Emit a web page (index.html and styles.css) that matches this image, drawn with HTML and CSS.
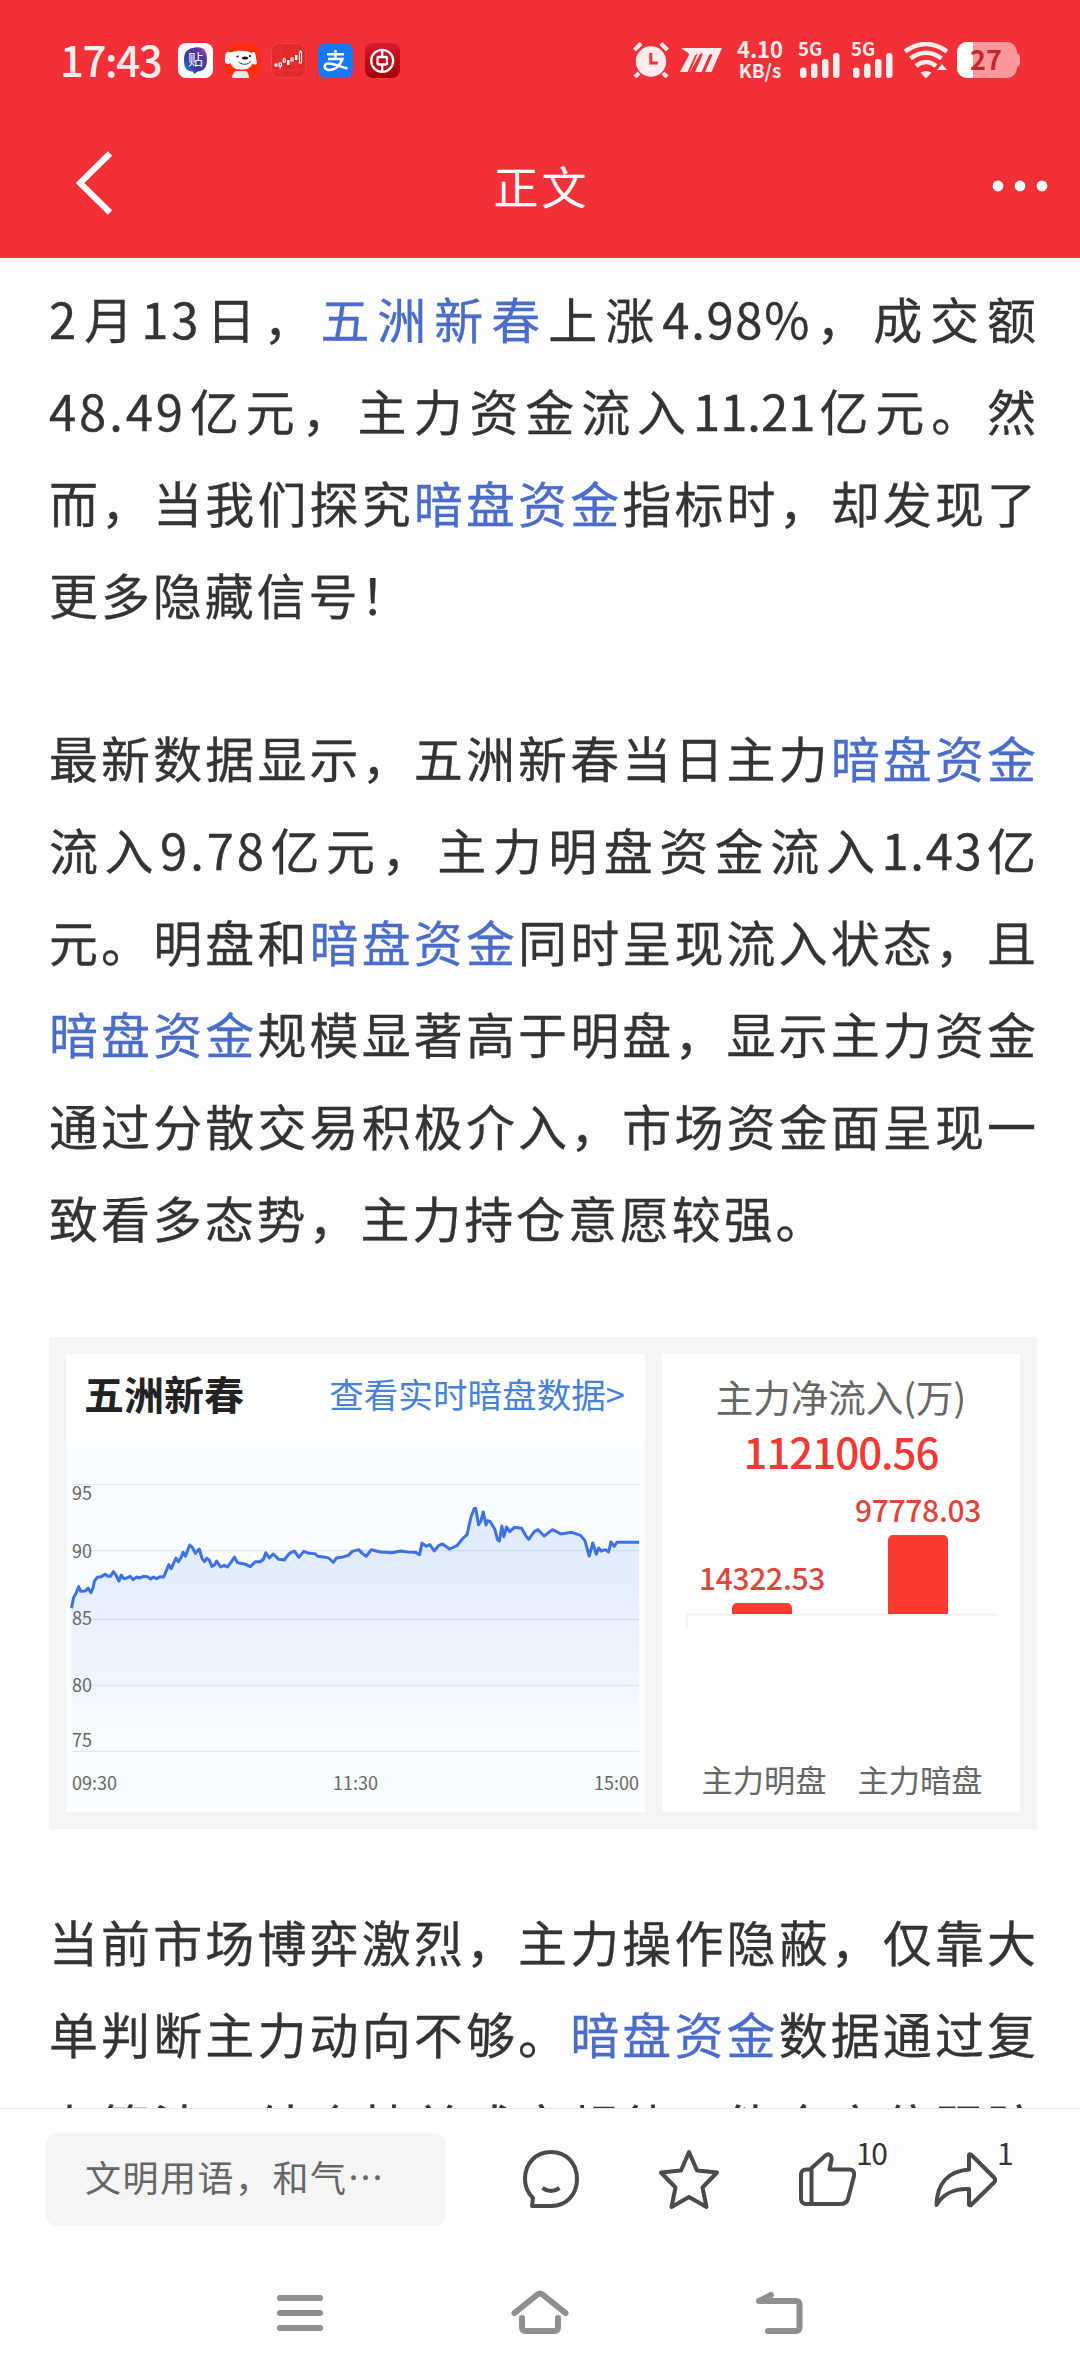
FILE: index.html
```html
<!DOCTYPE html>
<html lang="zh-CN">
<head>
<meta charset="utf-8">
<title>正文</title>
<link rel="stylesheet" href="styles.css">
</head>
<body>
<div class="screen">
  <header class="top">
    <div class="status">
      <span class="time">17:43</span>
      <div class="apps">
        <svg class="app" viewBox="0 0 35 35"><defs><linearGradient id="tb" x1="0" y1="1" x2="1" y2="0"><stop offset="0" stop-color="#1598f0"/><stop offset=".35" stop-color="#3a37a8"/><stop offset=".75" stop-color="#5038a4"/><stop offset="1" stop-color="#f0508c"/></linearGradient></defs><rect width="35" height="35" rx="8" fill="#fff"/><path d="M17 4.500C25 3.500 29 7 29 16s-3 12-9.500 12.500L16.500 31l-2-2.500C8 28 6 24.500 6 17S9 5.500 17 4.500z" fill="url(#tb)"/><text x="17.500" y="22" class="glyph tie">贴</text></svg>
        <svg class="app" viewBox="0 0 35 35"><rect width="35" height="35" rx="8" fill="#ff2d12"/><path d="M1 10c2-2 4-1 5-.500 5-2.500 16-2.500 20.500.500 2-2 4-1 4 2l1.500 8c-1 2-3 2-4.500.500-2 5-6 6-11 6s-9-1-11-6.500C3.500 22 .5 21 0 19c0-3 0-7 1-9z" fill="#fff"/><path d="M11 28h10c2 1.500 3 4 3 7H7c0-3 1.500-5.500 4-7z" fill="#f4e8e8"/><ellipse cx="20" cy="15" rx="3" ry="1.500" fill="#111"/><circle cx="12.500" cy="13.500" r="1.100" fill="#111"/><circle cx="25" cy="13" r="1.100" fill="#111"/><path d="M13.500 18.500c2 3.500 10.500 4 12-.500" fill="none" stroke="#333"/></svg>
        <svg class="app" viewBox="0 0 35 35"><rect x=".5" y=".5" width="34" height="34" rx="8" fill="#e32a2b" stroke="#ef4544"/><path d="M10 0v35M25 0v35M0 27h35" stroke="#ed3334"/><path d="M3.500 20.500h3v3h-3zM16 17h2.500v5H16zM24 12h2.500v5H24z" fill="#fff"/><path d="M8 20h2.500v3H8zM9.200 23v2.500M12.200 16h2v3h-2zM13 14.500V16M20 15h2v3h-2zM28.500 9h2v11h-2zM29.500 7v2" fill="none" stroke="#fff" stroke-width="1.100"/></svg>
        <svg class="app" viewBox="0 0 35 35"><rect width="35" height="35" rx="8" fill="#1677ff"/><path d="M9 11.200h17M17.500 7v8M10 16h14.500c-2 5.500-7 11-13 11-5.500 0-6.500-5.500-2-6.500 5-1 11 3 20 5" fill="none" stroke="#fff" stroke-width="2.500"/></svg>
        <svg class="app" viewBox="0 0 35 35"><defs><linearGradient id="bc" x2="0" y2="1"><stop stop-color="#d71d2c"/><stop offset="1" stop-color="#a4000b"/></linearGradient></defs><rect width="35" height="35" rx="8" fill="url(#bc)"/><g fill="none" stroke="#fff" stroke-width="2.300"><circle cx="17.200" cy="17.800" r="11"/><rect x="12.500" y="14" width="9.500" height="7.500" rx="1"/><path d="M17.200 7v7M17.200 21.500V29"/></g></svg>
      </div>
      <div class="signals">
        <svg class="alarm" viewBox="0 0 36 36"><circle cx="18" cy="19.500" r="15.200"/><path d="M6 31l-4 4M30 31l4 4M1.500 8L8 1.500M34.500 8L28 1.500" class="legs"/><path d="M17.800 11v10h7" class="hands"/></svg>
        <svg class="ride" viewBox="0 0 42 24"><path d="M1 0h41L31.500 24H25l7-16c1-2-1.800-3-2.800-1L21.500 24H15l7.500-17c.8-2-1.800-2.600-2.800-.6L10 24H0L9 7C9.500 4 4 3 1 0z"/><path d="M7.500 24L15 7.500l3-2.500-8.200 19z" fill="#f23038"/></svg>
        <div class="speed"><span>4.10</span><span>KB/s</span></div>
        <div class="cell"><span>5G</span><svg viewBox="0 0 40 25"><rect y="14.500" width="6.500" height="10.500" rx="3"/><rect x="11" y="10.500" width="6.500" height="14.500" rx="3"/><rect x="22" y="6" width="6.500" height="19" rx="3"/><rect x="33" width="6.500" height="25" rx="3"/></svg></div>
        <div class="cell second"><span>5G</span><svg viewBox="0 0 40 25"><rect y="14.500" width="6.500" height="10.500" rx="3"/><rect x="11" y="10.500" width="6.500" height="14.500" rx="3"/><rect x="22" y="6" width="6.500" height="19" rx="3"/><rect x="33" width="6.500" height="25" rx="3"/></svg></div>
        <svg class="wifi" viewBox="0 0 44 36"><path d="M1 9.500Q22-5.500 43 9.500M6.500 16.500Q22 5 37.500 16.500M12 24Q22 16 32 24" class="waves"/><path d="M16.500 30.500q5.500-3 11 0L22 36.500zM38 22l5 6H33z"/></svg>
        <svg class="battery" viewBox="0 0 63 36"><defs><clipPath id="bat"><rect width="60" height="36" rx="10"/></clipPath></defs><rect width="60" height="36" rx="10" fill="#fb989b"/><path d="M60 11c2 1 3 2 3 4v6c0 2-1 3-3 4z" fill="#fb989b"/><rect width="16" height="36" fill="#fff" clip-path="url(#bat)"/><text x="29" y="28" class="level">27</text></svg>
      </div>
    </div>
    <nav class="title-bar">
      <svg class="back" viewBox="0 0 37 64"><path d="M34 2.500L4 32l30 29.500"/></svg>
      <h1>正文</h1>
      <svg class="more" viewBox="0 0 56 12"><circle cx="6" cy="6" r="5.400"/><circle cx="28" cy="6" r="5.400"/><circle cx="50" cy="6" r="5.400"/></svg>
    </nav>
  </header>

  <main class="article">
    <p>
      <span class="line">2月13日，<a>五洲新春</a>上涨<span class="tight">4.98%</span>，成交额</span>
      <span class="line">48.49亿元，主力资金流入<span class="ones">11.21</span>亿元。然</span>
      <span class="line">而，当我们探究<a>暗盘资金</a>指标时，却发现了</span>
      <span class="line last">更多隐藏信号！</span>
    </p>
    <p>
      <span class="line">最新数据显示，五洲新春当日主力<a>暗盘资金</a></span>
      <span class="line">流入9.78亿元，主力明盘资金流入<span class="tight">1.43</span>亿</span>
      <span class="line">元。明盘和<a>暗盘资金</a>同时呈现流入状态，且</span>
      <span class="line"><a>暗盘资金</a>规模显著高于明盘，显示主力资金</span>
      <span class="line">通过分散交易积极介入，市场资金面呈现一</span>
      <span class="line last">致看多态势，主力持仓意愿较强。</span>
    </p>

    <section class="stock">
      <div class="card trend">
        <div class="trend-head"><b>五洲新春</b><a>查看实时暗盘数据&gt;</a></div>
        <div class="plot">
          <svg viewBox="66 360 1464 1104" preserveAspectRatio="none">
            <defs><linearGradient id="area" gradientUnits="userSpaceOnUse" x1="0" y1="560" x2="0" y2="1291"><stop stop-color="#3b6ff0" stop-opacity=".13"/><stop offset=".35" stop-color="#3b6ff0" stop-opacity=".1"/><stop offset="1" stop-color="#3b6ff0" stop-opacity="0"/></linearGradient></defs>
            <path class="grid" d="M80 490H1515M80 689H1515M80 895H1515M80 1093H1515M80 1291H1515"/>
            <path fill="url(#area)" d="M80 1291V862L98 797 129 815 145 769 186 752 206 768 313 768 344 711 379 672 403 684 422 712 457 738 492 708 532 737 571 695 604 715 643 690 742 724 806 686 838 686 912 690 960 701 966 667 997 690 1018 669 1036 684 1080 641 1100 562 1109 611 1121 573 1138 601 1162 660 1168 615 1218 622 1236 655 1259 626 1275 645 1296 626 1367 643 1389 705 1398 666 1419 690 1438 693 1444 663 1515 664V1291z"/>
            <polyline class="price" points="80,862 85,830 92,815 98,797 103,811 115,810 122,801 129,815 134,802 138,780 145,769 155,767 165,760 172,766 178,766 186,752 192,762 200,780 206,762 212,773 220,771 228,766 236,776 245,768 252,771 262,766 272,767 280,774 287,768 295,773 303,767 313,768 320,748 326,731 332,743 338,727 344,711 350,722 356,712 362,694 368,706 374,687 379,672 386,680 393,697 403,684 410,712 416,722 422,712 428,717 435,736 442,731 447,720 457,738 466,733 474,738 483,725 492,708 499,724 506,727 520,730 532,737 545,722 558,722 566,714 571,695 580,711 590,699 604,715 618,717 630,698 643,690 655,709 667,691 680,697 695,698 703,706 720,709 730,711 742,724 750,711 765,708 780,703 790,691 806,686 815,697 825,706 838,686 850,690 862,693 890,695 912,690 930,693 950,694 960,701 966,667 977,676 986,671 997,690 1008,674 1018,669 1036,684 1055,674 1068,654 1080,641 1090,588 1098,563 1102,562 1109,611 1115,600 1121,573 1128,612 1132,599 1138,601 1150,624 1157,656 1162,660 1168,615 1173,647 1180,618 1188,632 1200,619 1218,622 1228,643 1236,655 1250,632 1259,626 1275,645 1296,626 1318,639 1345,634 1367,643 1378,659 1389,705 1398,666 1407,700 1413,681 1419,690 1430,686 1438,693 1444,663 1452,676 1459,664 1515,664"/>
          </svg>
          <span class="tick y95">95</span><span class="tick y90">90</span><span class="tick y85">85</span><span class="tick y80">80</span><span class="tick y75">75</span>
          <div class="hours"><span>09:30</span><span>11:30</span><span>15:00</span></div>
        </div>
      </div>
      <div class="card flow">
        <div class="flow-title">主力净流入(万)</div>
        <div class="flow-total">112100.56</div>
        <div class="bars">
          <div class="col"><span>14322.53</span><i style="height:11px"></i></div>
          <div class="col"><span>97778.03</span><i style="height:79px"></i></div>
        </div>
        <div class="axis"></div>
        <div class="names"><span>主力明盘</span><span>主力暗盘</span></div>
      </div>
    </section>

    <p>
      <span class="line">当前市场博弈激烈，主力操作隐蔽，仅靠大</span>
      <span class="line">单判断主力动向不够。<a>暗盘资金</a>数据通过复</span>
      <span class="line">杂算法，结合挂单成交规律，能全方位跟踪</span>
    </p>
  </main>

  <footer class="actions">
    <div class="comment">文明用语，和气…</div>
    <div class="buttons">
      <svg viewBox="0 0 64 64"><path d="M13 59h19c16 0 26-12 26-27C58 16 47 5 32 5S6 16 6 32c0 8 3 14 8 19z"/><path d="M23.500 41q8.500 6 17 0"/></svg>
      <svg viewBox="0 0 64 64"><path d="M32 5l8 18.500 20 2-14.500 15L49.500 60 32 50 14.500 60l4-19.500L4 25.500l20-2z"/></svg>
      <div class="counted"><svg viewBox="0 0 64 64"><path d="M15 22.500h-4a5 5 0 0 0-5 5V52a5 5 0 0 0 5 5h34c5 0 7-2 8-5l6-23c.8-4-1-6.500-4-6.500H34.500l2-10c.6-4.500-3-6.500-6-4zM16.500 22.500V57"/></svg><span>10</span></div>
      <div class="counted"><svg viewBox="0 0 64 64"><path d="M36 8v14.500C15 24 4 37 3.500 58 11 46 21 41.500 36 42v15.500c.5 1 1.500 1 2 .5l23-22.500q2.500-2.500 0-5L38 7.500c-1-.5-1.500-.5-2 .5z"/></svg><span class="shares">1</span></div>
    </div>
  </footer>
  <div class="system">
    <svg viewBox="0 0 60 48"><path d="M10 9h40M10 24h40M10 39h40"/></svg>
    <svg viewBox="0 0 60 48"><path d="M4.500 24L27.500 5.500q2.500-2 5 0L55.500 24M12 29v9q0 4 4 4h28q4 0 4-4v-9"/></svg>
    <svg viewBox="0 0 60 48"><path d="M21 6L9 12M9 12h36.500q4 0 4 4v22q0 4-4 4H18"/></svg>
  </div>
</div>
</body>
</html>
```
FILE: styles.css
```css
* { box-sizing: border-box; }
body {
  margin: 0;
  font-family: "Noto Sans CJK SC", sans-serif;
  background: #fefefe;
  color: #333;
}
svg { display: block; flex: none; }
.screen { width: 1080px; height: 2376px; display: flex; flex-direction: column; overflow: hidden; }

.top { height: 258px; flex: none; background: #f23038; }
.status { height: 120px; padding: 0 60px 0 60px; display: flex; align-items: center; }
.time { width: 118px; padding-bottom: 3px; font-size: 42px; line-height: 42px; font-weight: 500; letter-spacing: -1.400px; color: #ffecec; }
.apps { display: flex; gap: 11.700px; }
.app { width: 35px; height: 35px; }
.glyph { text-anchor: middle; fill: #fff; }
.tie { font-size: 15px; }
.signals { margin-left: auto; display: flex; align-items: center; fill: #ffecec; color: #ffecec; }
.alarm { width: 36px; height: 36px; margin-right: 11px; }
.legs { stroke: #ffecec; stroke-width: 4; }
.hands { fill: none; stroke: #f23038; stroke-width: 3; }
.ride { width: 42px; height: 24px; margin-right: 16px; }
.speed { width: 44px; margin-right: 18px; padding-bottom: 2px; display: flex; flex-direction: column; align-items: center; font-size: 22px; line-height: 21px; font-weight: 700; }
.speed span + span { font-size: 19px; }
.cell { width: 40px; height: 36px; margin-right: 13px; display: flex; flex-direction: column; justify-content: flex-end; position: relative; }
.second { margin-right: 11px; }
.cell span { position: absolute; left: -2px; top: -3px; font-size: 18.500px; line-height: 18px; font-weight: 700; }
.cell svg { width: 40px; height: 25px; }
.wifi { width: 44px; height: 36px; margin-right: 9px; }
.waves { fill: none; stroke: #ffecec; stroke-width: 4.500; }
.battery { width: 63px; height: 36px; }
.level { font-size: 27px; font-weight: 700; text-anchor: middle; fill: #c1272d; }

.title-bar { height: 138px; padding: 0 32px 0 76px; display: grid; grid-template-columns: 1fr auto 1fr; align-items: center; }
.back { width: 37px; height: 64px; margin-bottom: 12px; fill: none; stroke: #fff; stroke-width: 6; }
.title-bar h1 { margin: 0 41px 7px 0; font-size: 45px; line-height: 60px; font-weight: 400; letter-spacing: 3px; color: #fff; }
.more { width: 56px; height: 12px; margin-bottom: 6px; justify-self: end; fill: #fff; }

.article { height: 1850px; flex: none; padding: 14px 41px 0 49px; overflow: hidden; }
.article p { margin: 0 0 70px; font-size: 49px; line-height: 92.160px; letter-spacing: 2.900px; -webkit-text-stroke: .3px; }
.line { display: block; white-space: nowrap; text-align-last: justify; }
.last { text-align-last: left; }
.tight { letter-spacing: 1.700px; }
.ones { letter-spacing: 0; }
a { color: #4a6ccb; }

.stock { width: 988px; height: 492px; margin: 73px 0 66px; padding: 17px; display: flex; gap: 17px; background: #f4f4f4; }
.card { background: #fff; height: 458px; }
.trend { width: 579px; }
.flow { width: 358px; padding-top: 16px; text-align: center; }
.trend-head { height: 87px; padding: 0 20px 8px 18px; display: flex; align-items: center; justify-content: space-between; }
.trend-head b { font-size: 40px; font-weight: 700; line-height: 50px; color: #222; }
.trend-head a { font-size: 34.600px; line-height: 50px; color: #4882d8; }
.plot { height: 368px; position: relative; background: #f9fdff; }
.plot svg { width: 579px; height: 368px; }
.grid { fill: none; stroke: #e2e8f0; stroke-width: 1.200; vector-effect: non-scaling-stroke; }
.price { fill: none; stroke: #3d72e6; stroke-width: 3; stroke-linejoin: round; vector-effect: non-scaling-stroke; }
.tick { position: absolute; left: 6px; font-size: 18px; line-height: 20px; color: #666; }
.y95 { top: 41px; }
.y90 { top: 99px; }
.y85 { top: 166px; }
.y80 { top: 233px; }
.y75 { top: 288px; }
.hours { position: absolute; left: 6px; right: 6px; top: 331px; display: flex; justify-content: space-between; font-size: 18px; line-height: 20px; color: #666; }

.flow-title { font-size: 37.500px; line-height: 52px; color: #666; }
.flow-total { font-size: 42px; line-height: 58px; font-weight: 500; letter-spacing: -1px; color: #f03a33; }
.bars { height: 134px; padding: 0 24px 0 22px; display: grid; grid-template-columns: 156px 156px; }
.col { display: flex; flex-direction: column; align-items: center; justify-content: flex-end; }
.col span { font-size: 30px; line-height: 34px; margin-bottom: 9px; font-weight: 500; letter-spacing: -.3px; color: #e0453c; }
.col i { width: 60px; border-radius: 5px 5px 0 0; background: #fc3b31; }
.axis { width: 312px; height: 16px; margin: -1px 0 0 23px; border-top: 3px solid #f4f4f4; border-left: 3px solid #f4f4f4; }
.names { margin-top: 128px; padding: 0 22px 0 24px; display: grid; grid-template-columns: 156px 156px; font-size: 31.200px; line-height: 44px; color: #666; }

.actions { height: 144px; flex: none; padding: 24px 0 0 46px; border-top: 1px solid #e5e5e5; display: flex; }
.comment { width: 400px; height: 93px; padding-left: 39px; border-radius: 11px; background: #f5f5f5; font-size: 36px; line-height: 87px; letter-spacing: 1.500px; color: #666; white-space: nowrap; }
.buttons { display: flex; gap: 74px; padding: 14px 0 0 73px; }
.buttons svg { width: 64px; height: 64px; fill: none; stroke: #4a4a4a; stroke-width: 4; stroke-linejoin: round; }
.counted { position: relative; }
.counted span { position: absolute; left: 61px; top: -10px; font-size: 30px; line-height: 30px; color: #333; letter-spacing: -1.500px; }
.counted .shares { left: 64px; }
.system { height: 124px; padding-top: 37px; display: flex; justify-content: center; gap: 180px; }
.system svg { width: 60px; height: 48px; fill: none; stroke: #8f8f8f; stroke-width: 6; stroke-linecap: round; }
```
